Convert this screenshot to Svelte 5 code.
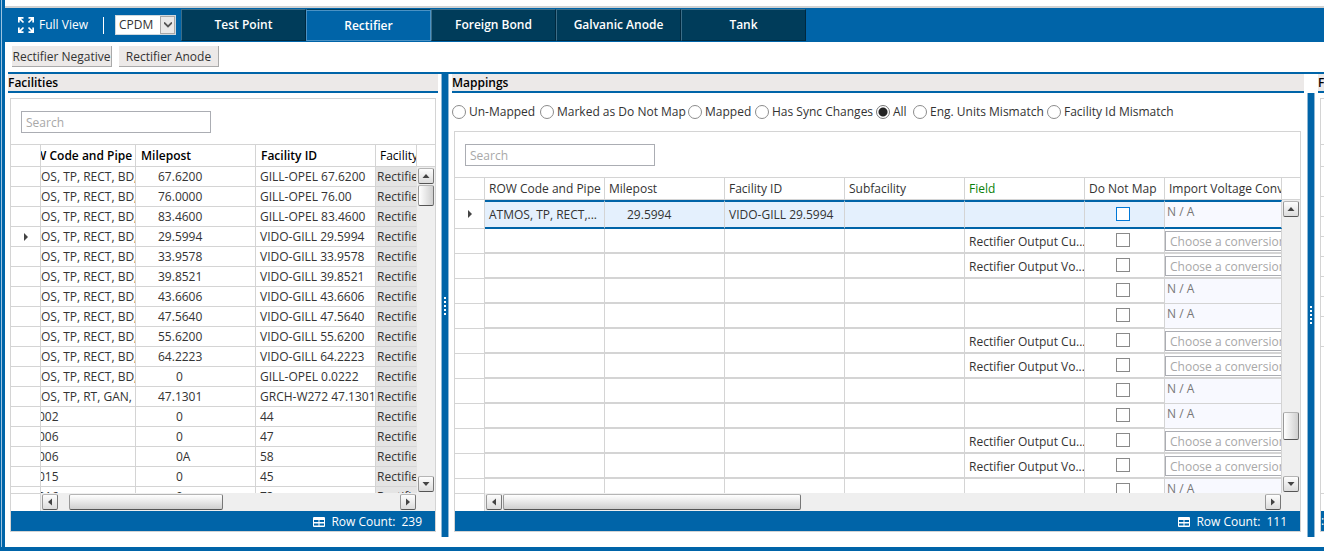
<script>
  const tabs = ['Test Point', 'Rectifier', 'Foreign Bond', 'Galvanic Anode', 'Tank'];
  let activeTab = $state('Rectifier');

  const facilities = [
    ['OS, TP, RECT, BD,', '67.6200', 'GILL-OPEL 67.6200'],
    ['OS, TP, RECT, BD,', '76.0000', 'GILL-OPEL 76.00'],
    ['OS, TP, RECT, BD,', '83.4600', 'GILL-OPEL 83.4600'],
    ['OS, TP, RECT, BD,', '29.5994', 'VIDO-GILL 29.5994'],
    ['OS, TP, RECT, BD,', '33.9578', 'VIDO-GILL 33.9578'],
    ['OS, TP, RECT, BD,', '39.8521', 'VIDO-GILL 39.8521'],
    ['OS, TP, RECT, BD,', '43.6606', 'VIDO-GILL 43.6606'],
    ['OS, TP, RECT, BD,', '47.5640', 'VIDO-GILL 47.5640'],
    ['OS, TP, RECT, BD,', '55.6200', 'VIDO-GILL 55.6200'],
    ['OS, TP, RECT, BD,', '64.2223', 'VIDO-GILL 64.2223'],
    ['OS, TP, RECT, BD,', '0', 'GILL-OPEL 0.0222'],
    ['OS, TP, RT, GAN, G', '47.1301', 'GRCH-W272 47.1301'],
    ['002', '0', '44'],
    ['006', '0', '47'],
    ['006', '0A', '58'],
    ['015', '0', '45'],
    ['016', '0', '73']
  ];
  const currentFacility = 3;

  const filters = ['Un-Mapped', 'Marked as Do Not Map', 'Mapped', 'Has Sync Changes', 'All', 'Eng. Units Mismatch', 'Facility Id Mismatch'];
  let filter = $state('All');

  const mappingColumns = ['ROW Code and Pipe', 'Milepost', 'Facility ID', 'Subfacility', 'Field', 'Do Not Map', 'Import Voltage Conve'];
  const cur = 'Rectifier Output Cu...';
  const vol = 'Rectifier Output Vo...';
  const mappings = [cur, vol, '', '', cur, vol, '', '', cur, vol, ''];
</script>

{#snippet arrow(d)}
  <svg width="8" height="8" viewBox="0 0 8 8" aria-hidden="true"><path {d} fill="#444" /></svg>
{/snippet}

{#snippet vbar(kind)}
  <div class="vbar {kind}">
    <button class="sb" aria-label="Scroll up">{@render arrow('M0.5 6 L4 2 L7.5 6Z')}</button>
    <div class="vtrack"><div class="vthumb"></div></div>
    <button class="sb" aria-label="Scroll down">{@render arrow('M0.5 2 L4 6 L7.5 2Z')}</button>
  </div>
{/snippet}

{#snippet hbar(kind)}
  <div class="hrow">
    <div class="hstub"></div>
    <div class="hbar {kind}">
      <button class="sb" aria-label="Scroll left">{@render arrow('M6 0.5 L2 4 L6 7.5Z')}</button>
      <div class="htrack"><div class="hthumb"></div></div>
      <button class="sb" aria-label="Scroll right">{@render arrow('M2 0.5 L6 4 L2 7.5Z')}</button>
    </div>
  </div>
{/snippet}

{#snippet footer(count)}
  <div class="foot">
    <svg width="12" height="10" viewBox="0 0 12 10" aria-hidden="true">
      <rect width="12" height="10" rx="1" fill="#fff" />
      <path d="M1 3h4.500v2h-4.500zM6.500 3h4.500v2h-4.500zM1 6.500h4.500v2h-4.500zM6.500 6.500h4.500v2h-4.500z" fill="#0064a8" />
    </svg>
    <span>Row Count:</span><span>{count}</span>
  </div>
{/snippet}

{#snippet splitter()}
  <div class="splitter">
    <div class="dots"><i></i><i></i><i></i><i></i><i></i></div>
  </div>
{/snippet}

<div class="app">
  <header class="bar">
    <button class="full">
      <svg width="16" height="16" viewBox="0 0 16 16" aria-hidden="true">
        <g fill="none" stroke="#fff" stroke-width="1.700">
          <path d="M0.850 5.500V0.850H5.500M0.850 0.850L5.500 5.500M10.500 0.850H15.150V5.500M15.150 0.850L10.500 5.500" />
          <path d="M0.850 10.500V15.150H5.500M0.850 15.150L5.500 10.500M10.500 15.150H15.150V10.500M15.150 15.150L10.500 10.500" />
        </g>
      </svg>
      <span>Full View</span>
    </button>
    <span class="sep"></span>
    <div class="pick">
      <select aria-label="Data source"><option>CPDM</option></select>
      <span class="drop">
        <svg width="8" height="6" viewBox="0 0 8 6" aria-hidden="true"><path d="M0 0.500 L4 4.500 L8 0.500" fill="none" stroke="#555" stroke-width="1.800" /></svg>
      </span>
    </div>
    <nav>
      {#each tabs as t}
        <button class="tab" class:active={t === activeTab} onclick={() => (activeTab = t)}>{t}</button>
      {/each}
    </nav>
  </header>

  <div class="sub">
    <button>Rectifier Negative</button>
    <button>Rectifier Anode</button>
  </div>

  <main>
    <section class="left">
      <h2>Facilities</h2>
      <div class="panel">
        <div class="search"><input type="text" placeholder="Search" aria-label="Search facilities" /></div>
        <div class="grid">
          <div class="view">
            <table class="fac">
              <colgroup><col class="rh" /><col class="c95" /><col class="c120" /><col class="c120" /><col /></colgroup>
              <thead>
                <tr><th></th><th class="cut head"><div>W Code and Pipe</div></th><th>Milepost</th><th>Facility ID</th><th class="plain">Facility</th></tr>
              </thead>
              <tbody>
                {#each facilities as [code, mile, id], i}
                  <tr>
                    <td class="mark">{#if i === currentFacility}{@render arrow('M2 0 L6 4 L2 8Z')}{/if}</td>
                    <td class="cut" class:num={code.length < 4}><div>{code}</div></td>
                    <td class={mile.length < 3 ? 'mile short' : 'mile'}>{mile}</td>
                    <td>{id}</td>
                    <td class="type">Rectifie</td>
                  </tr>
                {/each}
              </tbody>
            </table>
          </div>
          {@render vbar('a')}
        </div>
        {@render hbar('a')}
        {@render footer('239')}
      </div>
    </section>

    {@render splitter()}

    <section class="mid">
      <h2>Mappings</h2>
      <div class="radios">
        {#each filters as f}
          <label><input type="radio" name="filter" value={f} bind:group={filter} />{f}</label>
        {/each}
      </div>
      <div class="panel">
        <div class="search"><input type="text" placeholder="Search" aria-label="Search mappings" /></div>
        <div class="grid">
          <div class="view">
            <table class="map">
              <colgroup><col class="rh" /><col class="c120" /><col class="c120" /><col class="c120" /><col class="c120" /><col class="c120" /><col class="c80" /><col /></colgroup>
              <thead>
                <tr><th></th>{#each mappingColumns as c}<th class:green={c === 'Field'}>{c}</th>{/each}</tr>
              </thead>
              <tbody>
                <tr class="sel">
                  <td class="mark">{@render arrow('M2 0 L6 4 L2 8Z')}</td>
                  <td>ATMOS, TP, RECT,...</td><td class="mile">29.5994</td><td>VIDO-GILL 29.5994</td><td></td><td></td>
                  <td class="check"><input type="checkbox" aria-label="Do not map" /></td>
                  <td class="na">N / A</td>
                </tr>
                {#each mappings as field}
                  <tr>
                    <td class="mark"></td><td></td><td></td><td></td><td></td>
                    <td class="field">{field}</td>
                    <td class="check"><input type="checkbox" aria-label="Do not map" /></td>
                    {#if field}
                      <td class="conv"><input type="text" placeholder="Choose a conversion..." aria-label="Import voltage conversion" /></td>
                    {:else}
                      <td class="na">N / A</td>
                    {/if}
                  </tr>
                {/each}
              </tbody>
            </table>
          </div>
          {@render vbar('b')}
        </div>
        {@render hbar('b')}
        {@render footer('111')}
      </div>
    </section>

    <div class="late">{@render splitter()}</div>

    <section class="right">
      <h2>F</h2>
      <div class="panel">
        <div class="blank"></div>
        <div class="lines">
          <i class="h"></i><i class="t"></i>{#each Array(6) as _}<i></i>{/each}<i class="t"></i>
        </div>
        <div class="stub"></div>
        <div class="foot"><span>:</span></div>
      </div>
    </section>
  </main>
</div>

<style>
  :global(body) { background: #fff; }
  :global(*) { box-sizing: border-box; }
  .app {
    --blue: #0064a8;
    --line: #d4d4d4;
    height: 100vh;
    display: flex;
    flex-direction: column;
    padding: 6px 0 10px 5px;
    border-bottom: 4px solid var(--blue);
    background: linear-gradient(90deg, var(--blue) 1px, #9cc3df 1px 2px, var(--blue) 2px 5px, #fff 5px);
    font: 12px/16px "Open Sans", "Noto Sans", sans-serif;
    color: #333;
    overflow: hidden;
  }
  button, input, select { font: inherit; color: inherit; margin: 0; }
  button { padding: 0; border: 0; background: none; }

  .bar {
    flex: none;
    height: 36px;
    display: flex;
    align-items: center;
    border-top: 2px solid #d2d2d2;
    background: var(--blue);
    color: #fff;
  }
  .full { display: flex; align-items: center; gap: 5px; width: 98px; padding-left: 13px; white-space: nowrap; }
  .full svg { flex: none; }
  .sep { width: 1px; height: 17px; background: #fff; margin-right: 11px; }
  .pick { position: relative; width: 61px; height: 20px; margin-right: 5px; }
  .pick select { appearance: none; display: block; width: 100%; height: 20px; padding: 0 0 0 3px; border: 1px solid #cfd8de; border-radius: 0; background: #fff; color: #333; }
  .drop { position: absolute; right: 1px; top: 1px; width: 15px; height: 18px; border: 1px solid #a8a8a8; background: #e9e9e9; display: grid; place-items: center; pointer-events: none; }
  nav { display: flex; height: 32px; }
  .tab {
    width: 125px;
    background: #003c5a;
    border: 1px solid;
    border-color: #3c6d87 #00283e #002c42 #3c6d87;
    font-weight: 600;
    color: #fff;
  }
  .tab.active { background: var(--blue); border-color: #003c5a #4b92c4 #4b92c4; box-shadow: inset 0 1px #4b92c4; padding-top: 2px; }

  .sub { flex: none; display: flex; gap: 7px; height: 30px; padding: 4px 7px; }
  .sub button { width: 100px; height: 21px; padding-top: 1px; background: #ece9e8; border: solid #aaa; border-width: 0 1px 1px 0; white-space: nowrap; }

  main {
    flex: 1;
    min-height: 0;
    display: grid;
    grid-template-columns: 433fr 8px 858fr 8px 9px;
    grid-template-rows: minmax(0, 1fr);
    border-top: 2px solid var(--blue);
    margin-left: 3px;
  }
  section { display: flex; flex-direction: column; min-width: 0; min-height: 0; padding-bottom: 5px; }
  h2 { flex: none; height: 19px; margin: 0; font-size: 12px; line-height: 17px; font-weight: 600; color: #000; background: #ece9e8; border-bottom: 2px solid var(--blue); }
  .left { padding-right: 3px; }
  .left .panel { margin: 5px 2px 0; }
  .mid { padding: 0 3px 5px; }
  .mid .panel { margin: 0 3px 0 2px; }
  .right { padding: 0 0 5px 3px; overflow: hidden; }
  .right .panel { margin: 5px 0 0 2px; border-right: 0; }
  .panel { flex: 1; min-height: 0; display: flex; flex-direction: column; border: 1px solid var(--line); }

  .search { flex: none; padding: 12px 10px 11px; }
  .search input { display: block; width: 190px; height: 22px; padding: 1px 4px 0; border: 1px solid #abadb3; outline: none; }
  input::placeholder { color: #a8a8a8; opacity: 1; }

  .grid { flex: 1; min-height: 0; display: flex; border-top: 1px solid var(--line); }
  .view { flex: 1; min-width: 0; overflow: hidden; }
  table { width: 100%; table-layout: fixed; border-collapse: separate; border-spacing: 0; }
  .rh { width: 30px; }
  .c80 { width: 80px; }
  .c95 { width: 95px; }
  .c120 { width: 120px; }
  th, td { padding: 0 0 0 4px; border: solid var(--line); border-width: 0 1px 1px 0; text-align: left; white-space: nowrap; overflow: hidden; font-weight: 400; }
  th { height: 22px; }
  .mark { padding: 0 0 0 11px; }
  .mark svg { display: block; }
  .mile { padding-left: 22px; }
  .short { padding-left: 40px; }

  .fac th { font-weight: 600; color: #000; padding-left: 5px; }
  .fac th.plain { font-weight: 400; padding-left: 4px; }
  .fac td { height: 20px; line-height: 16px; }
  .fac .cut { padding-left: 0; }
  .fac .cut.head div { margin-left: -6px; }
  .fac .cut.num div { margin-left: -3px; }
  .fac .type { background: #e4e4e4; padding-left: 1px; border-right-color: #e4e4e4; }

  .map td { height: 25px; border-bottom-width: 2px; }
  .map .mark { border-bottom-width: 1px; padding-left: 11px; }
  .map .field { padding-top: 2px; }
  .green { color: #0a7f0a; }
  .map .check { padding: 0 3px 2px 0; text-align: center; }
  .check input { appearance: none; display: block; width: 14px; height: 14px; margin: 0 auto; border: 1px solid #8a8a8a; background: #fff; }
  .map .na { vertical-align: top; padding: 2px 0 0 2px; background: #f8f9ff; color: #777; border-bottom-width: 1px; }
  .map .conv { padding: 1px 0 0; }
  .conv input { display: block; width: 160px; height: 20px; padding: 1px 4px 0; border: 1px solid #abadb3; }
  .map .sel td { height: 29px; background: #e4f0fd; border-top: 2px solid var(--blue); border-bottom: 2px solid var(--blue); }
  .map .sel .mark { background: #fff; border-top: 0; border-bottom: 1px solid var(--line); }
  .map .sel .na { background: #f8f9ff; }
  .sel .check input { border-color: #0078d7; }

  .vbar { flex: none; width: 18px; margin-top: 22px; padding: 1px; display: flex; flex-direction: column; align-items: center; background: #efefef; box-shadow: 0 -1px var(--line); }
  .vtrack { flex: 1; width: 16px; padding-top: 1px; }
  .vthumb { width: 16px; height: 21px; background: linear-gradient(90deg, #fff, #cfcfcf); }
  .b .vtrack { padding-top: 195px; }
  .b .vthumb { height: 28px; }
  .sb { flex: none; width: 16px; height: 16px; display: grid; place-items: center; background: linear-gradient(#fdfdfd, #dcdcdc); }
  .sb, .vthumb, .hthumb { border: 1px solid; border-color: #b5b5b5 #777 #555 #999; border-radius: 2px; }
  .hrow { flex: none; height: 18px; display: flex; }
  .hstub { width: 30px; border: solid var(--line); border-width: 1px 1px 0 0; }
  .hbar { flex: 1; display: flex; align-items: center; padding: 0 19px 0 1px; background: #efefef; }
  .htrack { flex: 1; }
  .hthumb { height: 16px; background: linear-gradient(#fff, #cfcfcf); }
  .a .hthumb { width: 45%; margin-left: 11px; }
  .b .hthumb { width: 39%; margin-left: 1px; }

  .foot { flex: none; height: 20px; display: flex; align-items: center; justify-content: flex-end; gap: 6px; padding: 1px 13px 0 0; background: var(--blue); color: #fff; white-space: nowrap; }

  .splitter { height: 100%; background: var(--blue); border: solid #8fb8d6; border-width: 0 1px; display: grid; place-items: center; }
  .late { padding-top: 19px; }
  .dots { display: grid; gap: 2px; }
  .dots i { width: 2px; height: 2px; background: #fff; }

  .radios { flex: none; height: 38px; display: grid; grid-template-columns: 88px 148px 67px 121px 37px 134px auto; align-items: center; }
  .radios label { display: flex; align-items: center; gap: 3px; white-space: nowrap; }
  .radios input { appearance: none; flex: none; width: 14px; height: 14px; border: 1px solid #8c8c8c; border-radius: 50%; background: #fff; }
  .radios input:checked { background: radial-gradient(circle, #222 4px, #fff 5px); border-color: #777; }

  .blank { flex: none; height: 45px; }
  .lines { flex: 1; display: flex; flex-direction: column; border-top: 1px solid var(--line); overflow: hidden; }
  .lines i { flex: none; height: 20px; border-bottom: 1px solid var(--line); }
  .lines .h { height: 22px; }
  .lines .t { height: 30px; }
  .stub { flex: none; height: 18px; border-top: 1px solid var(--line); }
  .right .foot { justify-content: flex-start; padding: 0; }
</style>
